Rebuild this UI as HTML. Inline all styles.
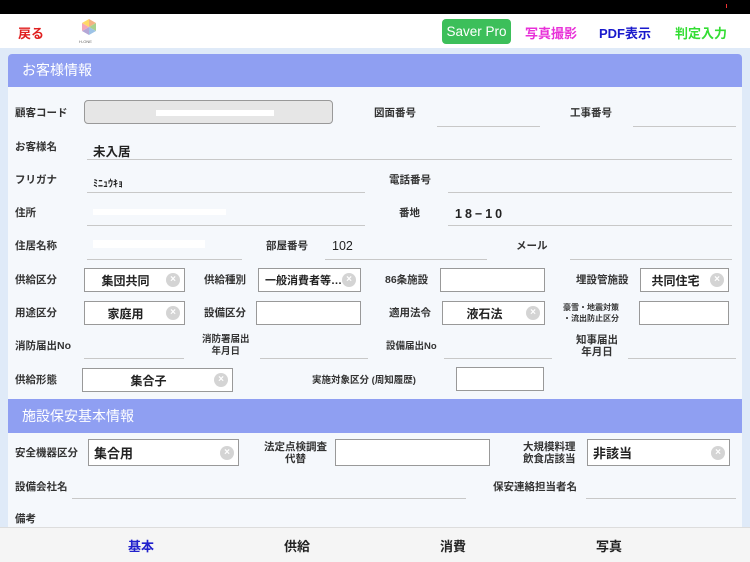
<!DOCTYPE html><html><head><meta charset="utf-8"><style>
*{margin:0;padding:0;box-sizing:border-box}
body{width:750px;height:562px;position:relative;overflow:hidden;background:#dfeaf8;font-family:"Liberation Sans","Noto Sans CJK JP",sans-serif;color:#222}
.a{position:absolute}
.l{position:absolute;font-size:10.5px;font-weight:bold;color:#333;white-space:nowrap;line-height:12px}
.c{text-align:center}
.u{position:absolute;height:1px;background:#c8c8c8}
.b{position:absolute;border:1px solid #999;background:#fff;font-size:12px;font-weight:bold;display:flex;align-items:center;justify-content:center;padding-right:18px;white-space:nowrap;overflow:hidden}
.x{position:absolute;right:4px;top:50%;margin-top:-7px;width:14px;height:14px;border-radius:50%;background:#d4d4d4;color:#fff;font-size:10px;line-height:14px;text-align:center;font-weight:bold}
.v{position:absolute;font-size:12.5px;font-weight:bold;color:#222}
.band{position:absolute;left:8px;width:734px;background:#8f9ff2;color:#fff;font-size:14px;padding-left:14px}
</style></head><body>
<div class="a" style="left:0;top:0;width:750px;height:14px;background:#000"></div>
<div class="a" style="left:726px;top:4px;width:1px;height:4px;background:#e33"></div>
<div class="a" style="left:0;top:14px;width:750px;height:34px;background:#fff"></div>
<div class="a" style="left:18px;top:23px;font-size:13px;font-weight:bold;color:#e02020">戻る</div>
<svg class="a" style="left:80px;top:18px" width="18" height="20" viewBox="0 0 18 20"><polygon points="9,1 16,5 9,9" fill="#f4b183"/><polygon points="16,5 16,13 9,9" fill="#a9d18e"/><polygon points="16,13 9,17 9,9" fill="#9dc3e6"/><polygon points="9,17 2,13 9,9" fill="#b4a7d6"/><polygon points="2,13 2,5 9,9" fill="#f4a6b8"/><polygon points="2,5 9,1 9,9" fill="#ffd966"/></svg>
<div class="a" style="left:79px;top:39px;font-size:4px;color:#666">H-ONE</div>
<div class="a" style="left:442px;top:19px;width:69px;height:25px;background:#3cbf5a;border-radius:4px;color:#fff;font-size:13.5px;text-align:center;line-height:25px">Saver Pro</div>
<div class="a" style="left:525px;top:23px;font-size:13px;font-weight:bold;color:#e830d8">写真撮影</div>
<div class="a" style="left:599px;top:23px;font-size:13px;font-weight:bold;color:#1a1acc">PDF表示</div>
<div class="a" style="left:675px;top:23px;font-size:13px;font-weight:bold;color:#33dd33">判定入力</div>
<div class="a" style="left:8px;top:54px;width:734px;height:474px;background:#f5f8fc;border-radius:4px 4px 0 0"></div>
<div class="band" style="top:54px;height:33px;line-height:33px;border-radius:4px 4px 0 0">お客様情報</div>
<div class="l" style="left:15px;top:107px">顧客コード</div>
<div class="a" style="left:84px;top:100px;width:249px;height:24px;border:1px solid #999;border-radius:4px;background:#e6e6e6"></div>
<div class="a" style="left:156px;top:110px;width:118px;height:6px;background:#fff"></div>
<div class="l" style="left:374px;top:107px">図面番号</div><div class="u" style="left:437px;top:126px;width:103px"></div>
<div class="l" style="left:570px;top:107px">工事番号</div><div class="u" style="left:633px;top:126px;width:103px"></div>
<div class="l" style="left:15px;top:141px">お客様名</div><div class="v" style="left:93px;top:141px">未入居</div><div class="u" style="left:87px;top:159px;width:645px"></div>
<div class="l" style="left:15px;top:174px">フリガナ</div><div class="v" style="left:93px;top:175px;font-size:10px">ﾐﾆｭｳｷｮ</div><div class="u" style="left:87px;top:192px;width:278px"></div>
<div class="l" style="left:389px;top:174px">電話番号</div><div class="u" style="left:448px;top:192px;width:284px"></div>
<div class="l" style="left:15px;top:207px">住所</div><div class="a" style="left:93px;top:209px;width:133px;height:6px;background:#fff"></div><div class="u" style="left:87px;top:225px;width:278px"></div>
<div class="l" style="left:399px;top:207px">番地</div><div class="v" style="left:455px;top:207px;letter-spacing:3px">18−10</div><div class="u" style="left:448px;top:225px;width:284px"></div>
<div class="l" style="left:15px;top:240px">住居名称</div><div class="a" style="left:93px;top:240px;width:112px;height:8px;background:#fff"></div><div class="u" style="left:87px;top:259px;width:155px"></div>
<div class="l" style="left:266px;top:240px">部屋番号</div><div class="v" style="left:332px;top:239px;font-weight:normal">102</div><div class="u" style="left:325px;top:259px;width:162px"></div>
<div class="l" style="left:516px;top:240px">メール</div><div class="u" style="left:570px;top:259px;width:162px"></div>
<div class="l" style="left:15px;top:274px">供給区分</div><div class="b" style="left:84px;top:268px;width:101px;height:24px">集団共同<span class="x">×</span></div>
<div class="l" style="left:204px;top:274px">供給種別</div><div class="b" style="left:258px;top:268px;width:103px;height:24px;justify-content:flex-start;padding-left:6px;font-size:11px">一般消費者等…<span class="x">×</span></div>
<div class="l" style="left:385px;top:274px">86条施設</div><div class="b" style="left:440px;top:268px;width:105px;height:24px"></div>
<div class="l" style="left:576px;top:274px">埋設管施設</div><div class="b" style="left:640px;top:268px;width:89px;height:24px">共同住宅<span class="x">×</span></div>
<div class="l" style="left:15px;top:307px">用途区分</div><div class="b" style="left:84px;top:301px;width:101px;height:24px">家庭用<span class="x">×</span></div>
<div class="l" style="left:204px;top:307px">設備区分</div><div class="b" style="left:256px;top:301px;width:105px;height:24px"></div>
<div class="l" style="left:389px;top:307px">適用法令</div><div class="b" style="left:442px;top:301px;width:103px;height:24px">液石法<span class="x">×</span></div>
<div class="l c" style="left:563px;top:302px;font-size:8px;line-height:11px">豪雪・地震対策<br>・流出防止区分</div><div class="b" style="left:639px;top:301px;width:90px;height:24px"></div>
<div class="l" style="left:15px;top:340px">消防届出No</div><div class="u" style="left:84px;top:358px;width:100px"></div>
<div class="l c" style="left:202px;top:334px;font-size:9.5px">消防署届出<br>年月日</div><div class="u" style="left:260px;top:358px;width:108px"></div>
<div class="l" style="left:386px;top:341px;font-size:9.5px">設備届出No</div><div class="u" style="left:444px;top:358px;width:108px"></div>
<div class="l c" style="left:576px;top:334px">知事届出<br>年月日</div><div class="u" style="left:628px;top:358px;width:108px"></div>
<div class="l" style="left:15px;top:374px">供給形態</div><div class="b" style="left:82px;top:368px;width:151px;height:24px">集合子<span class="x">×</span></div>
<div class="l" style="left:312px;top:375px;font-size:9.5px">実施対象区分 (周知履歴)</div><div class="b" style="left:456px;top:367px;width:88px;height:24px"></div>
<div class="band" style="top:399px;height:34px;line-height:34px">施設保安基本情報</div>
<div class="l" style="left:15px;top:447px">安全機器区分</div><div class="b" style="left:88px;top:439px;width:151px;height:27px;justify-content:flex-start;padding-left:5px;font-size:13px">集合用<span class="x">×</span></div>
<div class="l c" style="left:264px;top:441px">法定点検調査<br>代替</div><div class="b" style="left:335px;top:439px;width:155px;height:27px"></div>
<div class="l c" style="left:523px;top:441px">大規模料理<br>飲食店該当</div><div class="b" style="left:587px;top:439px;width:143px;height:27px;justify-content:flex-start;padding-left:5px;font-size:13px">非該当<span class="x">×</span></div>
<div class="l" style="left:15px;top:481px">設備会社名</div><div class="u" style="left:72px;top:498px;width:394px"></div>
<div class="l" style="left:493px;top:481px">保安連絡担当者名</div><div class="u" style="left:586px;top:498px;width:150px"></div>
<div class="l" style="left:15px;top:513px">備考</div>
<div class="a" style="left:0;top:527px;width:750px;height:35px;background:#f5f5f5;border-top:1px solid #ddd"></div>
<div class="a" style="left:128px;top:536px;font-size:13px;font-weight:bold;color:#2222cc">基本</div>
<div class="a" style="left:284px;top:536px;font-size:13px;font-weight:bold">供給</div>
<div class="a" style="left:440px;top:536px;font-size:13px;font-weight:bold">消費</div>
<div class="a" style="left:596px;top:536px;font-size:13px;font-weight:bold">写真</div>
</body></html>
